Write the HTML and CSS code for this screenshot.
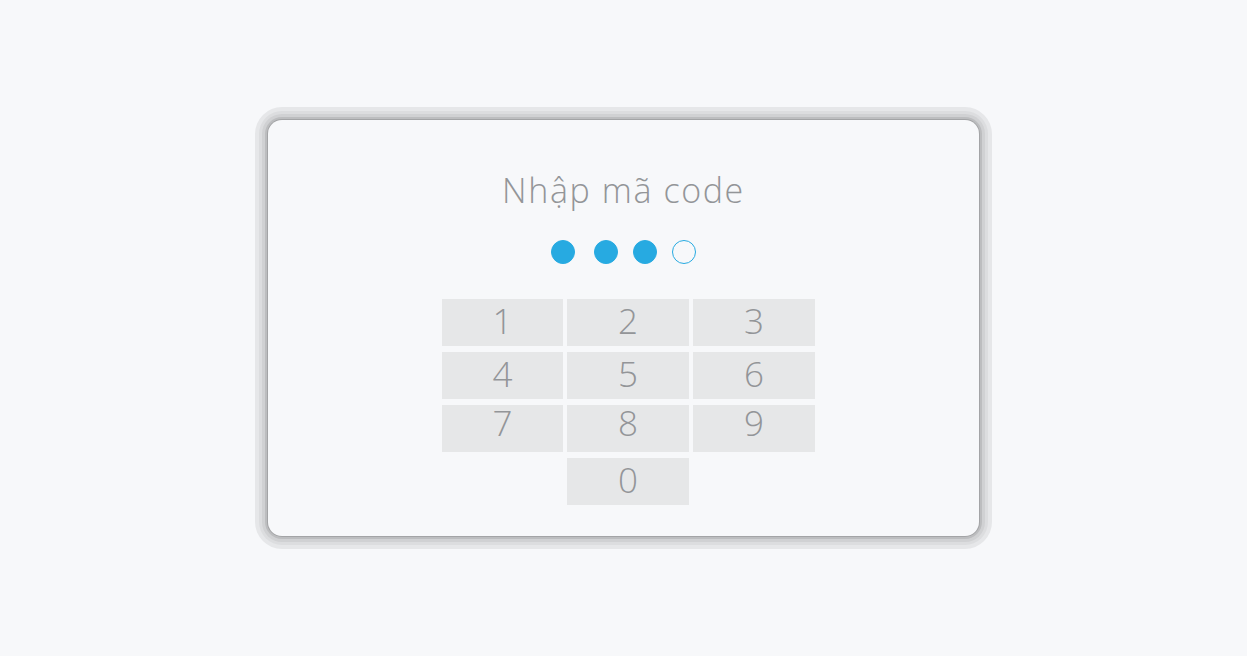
FILE: index.html
```html
<!DOCTYPE html>
<html lang="vi">
<head>
    <meta charset="UTF-8">
    <meta name="viewport" content="width=device-width, initial-scale=1.0">
    <title>Nhập mã code</title>
    <link rel="stylesheet" href="styles.css">
</head>
<body>
    <div class="card">
        <h1>Nhập mã code</h1>
        <div class="dots">
            <span class="dot filled"></span>
            <span class="dot filled"></span>
            <span class="dot filled"></span>
            <span class="dot"></span>
        </div>
        <div class="keypad">
            <button class="key">1</button>
            <button class="key">2</button>
            <button class="key">3</button>
            <button class="key">4</button>
            <button class="key">5</button>
            <button class="key">6</button>
            <button class="key high">7</button>
            <button class="key high">8</button>
            <button class="key high">9</button>
            <button class="key zero">0</button>
        </div>
    </div>
</body>
</html>
```

FILE: styles.css
```css
html, body {
    height: 100%;
}

body {
    margin: 0;
    background: #f7f8fa;
    font-family: "Open Sans", "Noto Sans", sans-serif;
    display: flex;
    align-items: center;
    justify-content: center;
}

.card {
    width: 711px;
    height: 416px;
    box-sizing: border-box;
    background: #f7f8fa;
    border-radius: 14px;
    box-shadow:
        0 0 0 1px #a3a4a6,
        0 0 0 3px #bcbdbf,
        0 0 0 6px #d0d1d3,
        0 0 0 9px #dcdddf,
        0 0 0 13px #e6e7e9;
    display: flex;
    flex-direction: column;
    align-items: center;
    padding-top: 47px;
}

h1 {
    margin: 0;
    font-size: 34px;
    font-weight: 300;
    color: #939598;
    line-height: 46px;
    letter-spacing: 1.6px;
}

.dots {
    display: flex;
    gap: 15px;
    margin-top: 27px;
}

.dot {
    width: 24px;
    height: 24px;
    border-radius: 50%;
    box-sizing: border-box;
    border: 1.5px solid #27aae1;
}

.dot.filled {
    background: #27aae1;
}

.dot:first-child {
    margin-right: 4px;
}

.keypad {
    display: grid;
    grid-template-columns: 121px 122px 122px;
    grid-auto-rows: 47px;
    column-gap: 4px;
    row-gap: 6px;
    margin-top: 35px;
    margin-left: 10px;
}

.key {
    border: none;
    padding: 0 0 4px;
    margin: 0;
    background: #e6e7e8;
    color: #939598;
    font-family: inherit;
    font-size: 35px;
    font-weight: 300;
    line-height: 1;
}

.key.high {
    padding-bottom: 12px;
}

.key.zero {
    grid-column: 2;
}
```
